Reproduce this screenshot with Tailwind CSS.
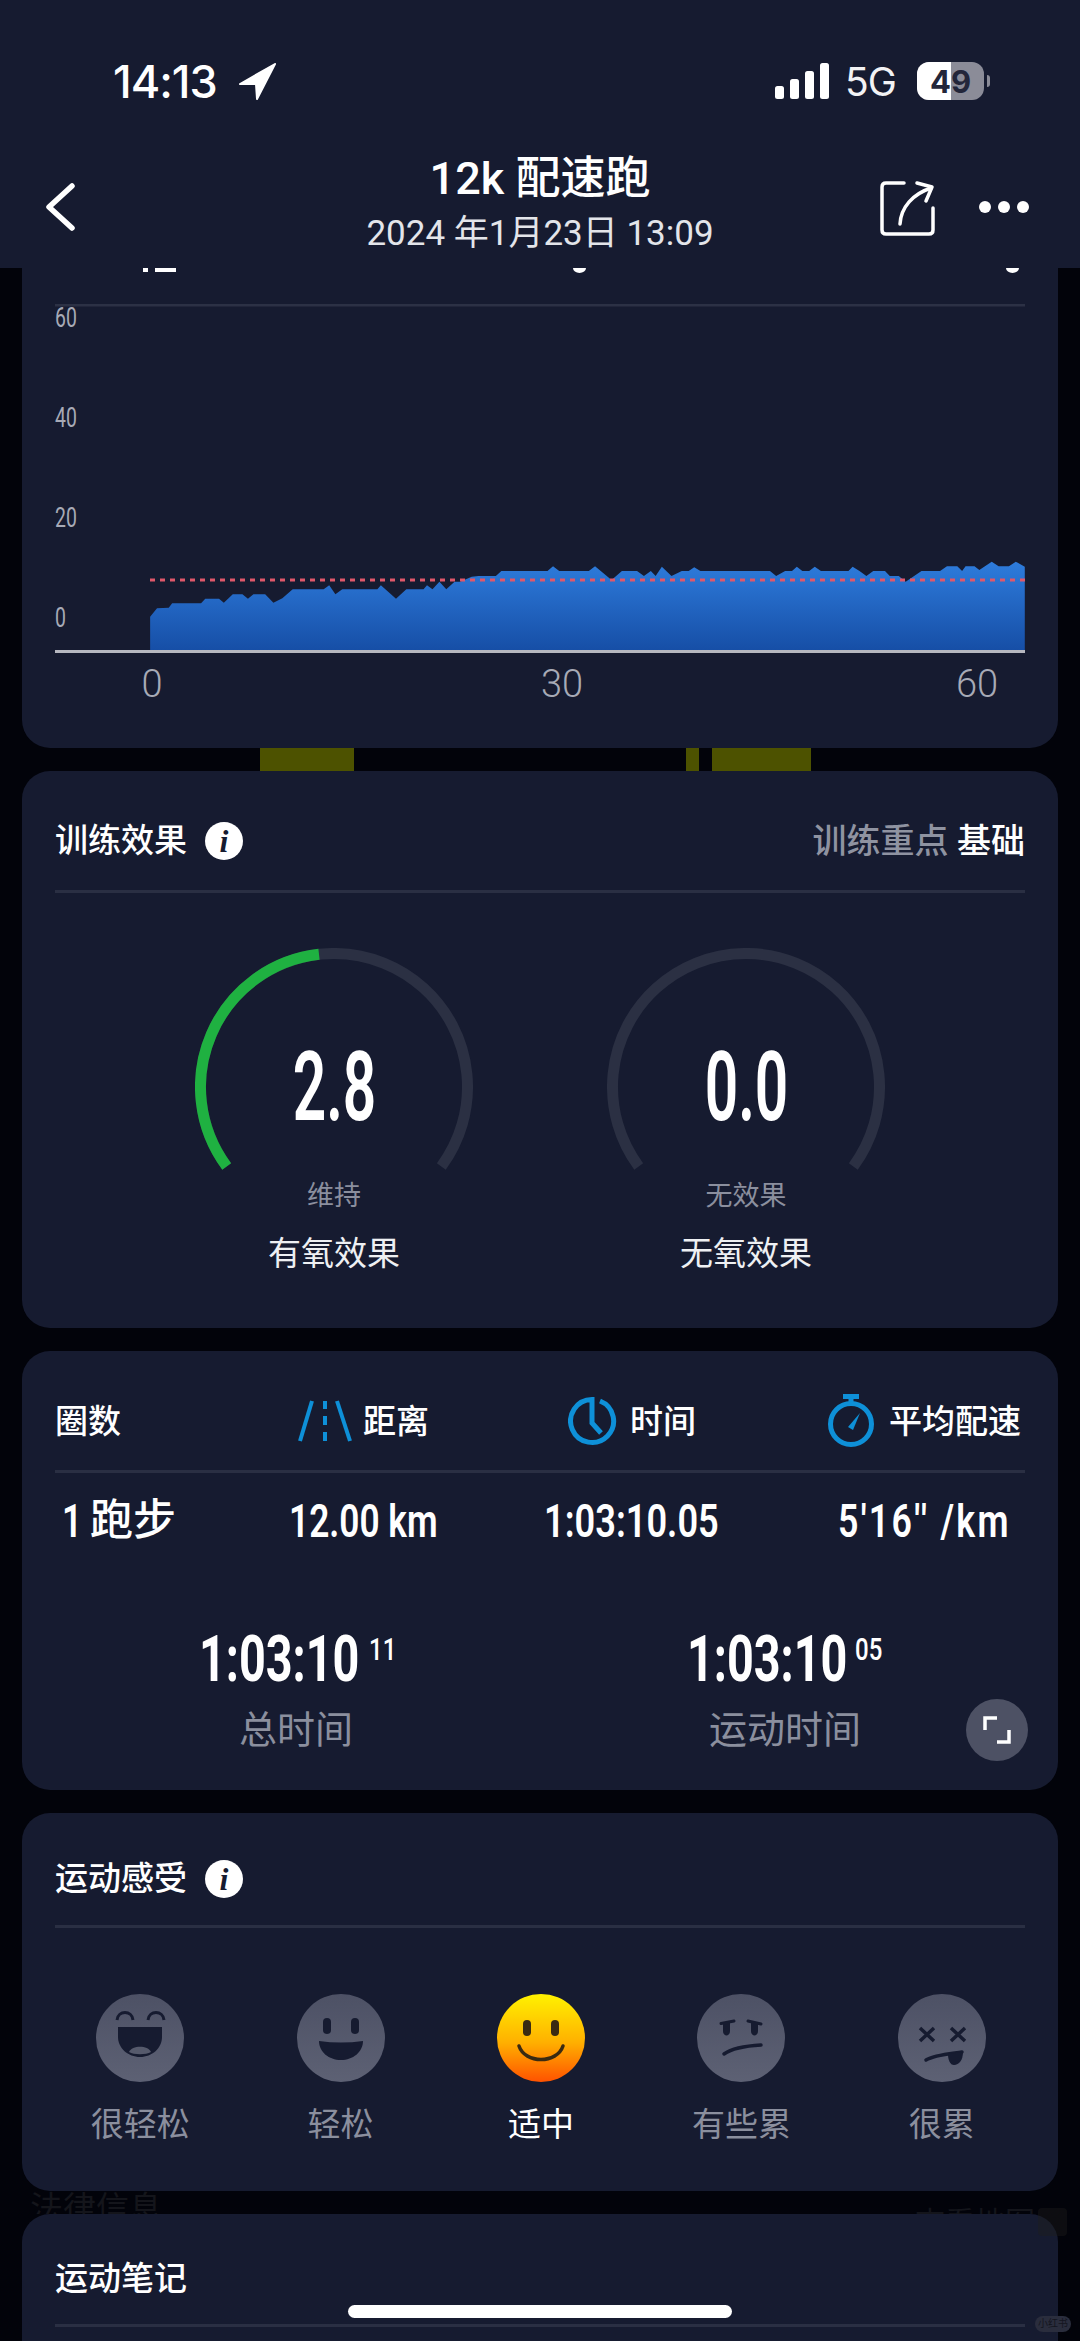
<!DOCTYPE html>
<html lang="zh">
<head>
<meta charset="utf-8">
<title>12k 配速跑</title>
<script src="https://cdn.jsdelivr.net/npm/@tailwindcss/browser@4"></script>
</head>
<body class="bg-[#02030a]">
<div class="relative w-[1080px] h-[2341px] overflow-hidden bg-[#02030a] text-white [font-family:Roboto,'Noto_Sans_CJK_SC',sans-serif]">

  <!-- top bar -->
  <header class="h-[268px] bg-[#161b30] pt-[60px]">
    <div class="flex items-center justify-between h-[42px]">
      <div class="flex items-center pl-[113px]">
        <span class="text-[45px] font-medium leading-none [font-family:Inter,sans-serif] tracking-[-1px] inline-block w-[116px] whitespace-nowrap">14:13</span>
        <svg class="ml-[10px]" width="37" height="37" viewBox="0 0 37 37"><path d="M36 1 L1 21 L17 21 L18 36 Z" fill="#fff" stroke="#fff" stroke-width="2" stroke-linejoin="round"/></svg>
      </div>
      <div class="flex items-center pr-[90px]">
        <svg width="54" height="36" viewBox="0 0 54 36" fill="#fff"><rect x="0" y="23" width="9" height="13" rx="2.5"/><rect x="15" y="16" width="9" height="20" rx="2.5"/><rect x="30" y="8" width="9" height="28" rx="2.5"/><rect x="45" y="0" width="9" height="36" rx="2.5"/></svg>
        <span class="ml-[16px] w-[52px] text-[39px] leading-none [font-family:Inter,sans-serif] tracking-[-1px] text-[#f2f2f4] whitespace-nowrap">5G</span>
        <div class="relative ml-[20px] w-[67px] h-[38px] rounded-[12px] overflow-hidden bg-[#8b8c98]">
          <div class="w-[34px] h-full bg-white"></div>
          <span class="absolute inset-0 flex items-center justify-center text-[31px] font-bold text-[#23263a] [font-family:Inter,sans-serif] leading-none">49</span>
        </div>
        <div class="ml-[3px] w-[3px] h-[12px] rounded-r-full bg-[#8b8c98]"></div>
      </div>
    </div>

    <div class="grid grid-cols-[1fr_auto_1fr] mt-[49px]">
      <div class="pl-[45px] pt-[32px]">
        <svg width="30" height="48" viewBox="0 0 30 48" fill="none" stroke="#fff" stroke-width="5.5" stroke-linecap="round" stroke-linejoin="round"><path d="M27 3 L4 24 L27 45"/></svg>
      </div>
      <div class="flex flex-col items-center">
        <div class="h-[54px] flex items-center text-[45px] font-medium leading-none whitespace-nowrap">12k 配速跑</div>
        <div class="h-[56px] flex items-center text-[35px] leading-none text-[#e3e5ea] whitespace-nowrap">2024 年1月23日 13:09</div>
      </div>
      <div class="flex justify-end items-start pt-[29px] pr-[50px]">
        <svg width="56" height="56" viewBox="0 0 56 56" fill="none" stroke="#fff" stroke-width="3.5" stroke-linecap="round" stroke-linejoin="round"><path d="M24 3 H6 Q2 3 2 7 V50 Q2 54 6 54 H49 Q53 54 53 50 V28"/><path d="M20 44 C21 27 33 14 51 8"/><path d="M37 3 L52 7 L46 21"/></svg>
        <svg class="ml-[42px] mt-[20px]" width="52" height="14" viewBox="0 0 52 14" fill="#fff"><circle cx="7" cy="7" r="6"/><circle cx="26" cy="7" r="6"/><circle cx="45" cy="7" r="6"/></svg>
      </div>
    </div>
  </header>

  <!-- pace chart, scrolled under the bar -->
  <section class="relative mx-[22px] h-[480px] rounded-b-[28px] bg-[#161b30]">
    <svg class="block" width="1036" height="480" viewBox="0 0 1036 480">
      <defs>
        <linearGradient id="area" x1="0" y1="0" x2="0" y2="1">
          <stop offset="0" stop-color="#2e7cdc"/>
          <stop offset="1" stop-color="#164ea6"/>
        </linearGradient>
      </defs>
      <rect x="121" y="0" width="5" height="4" fill="#fff"/><rect x="133" y="0" width="21" height="4" fill="#fff"/>
      <path d="M551 0 h13 a6.5 5 0 0 1 -13 0Z M984 0 h13 a6.5 5 0 0 1 -13 0Z" fill="#fff"/>
      <rect x="33" y="36" width="970" height="2.5" fill="#2c3145"/>
      <g transform="translate(-22,232) scale(0.6887,0.33333)">
        <polygon fill="url(#area)" points="218,350 228,325 245,323 250,310 292,310 298,296 318,296 325,308 338,283 352,283 360,296 368,283 385,283 397,308 410,295 425,268 470,268 478,256 487,283 497,268 548,268 553,256 575,296 590,268 615,268 620,256 628,268 638,245 648,268 660,245 668,245 685,230 695,228 720,228 728,213 795,213 803,199 812,213 855,213 864,199 888,240 903,213 925,213 935,228 945,213 952,228 961,200 975,228 990,213 1000,213 1008,202 1017,213 1118,213 1127,228 1140,213 1150,213 1157,200 1165,213 1175,213 1183,200 1192,213 1232,213 1238,200 1248,213 1258,228 1268,213 1285,213 1292,228 1305,228 1315,245 1338,213 1365,213 1375,199 1390,199 1397,213 1402,199 1415,199 1422,210 1440,185 1450,199 1465,199 1475,185 1488,200 1488,452 218,452"/>
      </g>
      <line x1="128" y1="312" x2="1003" y2="312" stroke="#e0586a" stroke-width="3" stroke-dasharray="5 5"/>
      <rect x="33" y="382" width="970" height="3" fill="#b6b8c0"/>
    </svg>
    <span class="absolute left-[33px] top-[36px] h-[28px] w-[40px] origin-left scale-x-[0.72] text-[27px] leading-[28px] text-[#a7aab6]">60</span>
    <span class="absolute left-[33px] top-[136px] h-[28px] w-[40px] origin-left scale-x-[0.72] text-[27px] leading-[28px] text-[#a7aab6]">40</span>
    <span class="absolute left-[33px] top-[236px] h-[28px] w-[40px] origin-left scale-x-[0.72] text-[27px] leading-[28px] text-[#a7aab6]">20</span>
    <span class="absolute left-[33px] top-[336px] h-[28px] w-[40px] origin-left scale-x-[0.72] text-[27px] leading-[28px] text-[#a7aab6]">0</span>
    <span class="absolute left-[110px] top-[394px] w-[40px] text-center text-[38px] leading-[44px] font-light text-[#a7aab6]">0</span>
    <span class="absolute left-[510px] top-[394px] w-[60px] text-center text-[38px] leading-[44px] font-light text-[#a7aab6]">30</span>
    <span class="absolute left-[925px] top-[394px] w-[60px] text-center text-[38px] leading-[44px] font-light text-[#a7aab6]">60</span>
  </section>

  <!-- map stripes showing behind the cards -->
  <div class="flex h-[23px]">
    <div class="ml-[260px] w-[94px] bg-[#4d5200]"></div>
    <div class="ml-[332px] w-[13px] bg-[#4d5200]"></div>
    <div class="ml-[13px] w-[99px] bg-[#4d5200]"></div>
  </div>

  <!-- training effect -->
  <section class="mx-[22px] h-[557px] rounded-[28px] bg-[#161b30] px-[33px]">
    <div class="flex items-center justify-between h-[122px] pt-[20px] border-b-[3px] border-[#2a2f43]">
      <div class="flex items-center">
        <span class="text-[33px] font-medium leading-none">训练效果</span>
        <span class="ml-[18px] flex items-center justify-center w-[38px] h-[38px] rounded-full bg-white text-[#161b30] text-[32px] font-bold italic leading-none [font-family:'Liberation_Serif',serif]">i</span>
      </div>
      <div class="text-[34px] leading-none font-medium text-[#8f93a1]">训练重点 <span class="text-white">基础</span></div>
    </div>
    <div class="flex pl-[140px] pt-[55px]">
      <div class="relative flex flex-col items-center w-[278px]">
        <svg width="278" height="225" viewBox="0 0 278 225" fill="none" stroke-width="11">
          <path d="M31.7 218.4 A133.5 133.5 0 1 1 246.3 218.4" stroke="#2b3043"/>
          <path d="M31.7 218.4 A133.5 133.5 0 0 1 124 6.3" stroke="#1fb141"/>
        </svg>
        <div class="absolute top-[79px] left-0 right-0 flex justify-center">
          <span class="inline-block scale-x-[0.61] text-[96px] font-semibold leading-[120px]">2.8</span>
        </div>
        <span class="h-[46px] flex items-center text-[27px] text-[#8b8f9e] leading-none">维持</span>
        <span class="h-[68px] flex items-center text-[33px] text-[#eef0f3] leading-none">有氧效果</span>
      </div>
      <div class="relative flex flex-col items-center w-[278px] ml-[134px]">
        <svg width="278" height="225" viewBox="0 0 278 225" fill="none" stroke-width="11">
          <path d="M31.7 218.4 A133.5 133.5 0 1 1 246.3 218.4" stroke="#2b3043"/>
        </svg>
        <div class="absolute top-[79px] left-0 right-0 flex justify-center">
          <span class="inline-block scale-x-[0.61] text-[96px] font-semibold leading-[120px]">0.0</span>
        </div>
        <span class="h-[46px] flex items-center text-[27px] text-[#8b8f9e] leading-none">无效果</span>
        <span class="h-[68px] flex items-center text-[33px] text-[#eef0f3] leading-none">无氧效果</span>
      </div>
    </div>
  </section>

  <div class="h-[23px]"></div>

  <!-- laps -->
  <section class="relative mx-[22px] h-[439px] rounded-[28px] bg-[#161b30] px-[33px]">
    <div class="grid grid-cols-[243px_270px_260px_1fr] items-center h-[122px] pt-[21px] border-b-[3px] border-[#2a2f43] text-[33px] font-medium">
      <span class="leading-none">圈数</span>
      <div class="flex items-center">
        <svg width="54" height="42" viewBox="0 0 54 42" fill="none" stroke="#0e90d8" stroke-width="4"><path d="M14 1 L2 41"/><path d="M39 1 L52 41"/><path d="M27 1 V9 M27 16 V25 M27 32 V41"/></svg>
        <span class="ml-[11px] leading-none">距离</span>
      </div>
      <div class="flex items-center">
        <svg width="50" height="50" viewBox="0 0 50 50" fill="none" stroke="#0e90d8" stroke-width="5"><path d="M32 5 A21.5 21.5 0 1 1 24 3.5 V27 L33 37"/></svg>
        <span class="ml-[12px] leading-none">时间</span>
      </div>
      <div class="flex items-center">
        <svg width="46" height="54" viewBox="0 0 46 54" fill="none" stroke="#0e90d8" stroke-width="5"><path d="M15 2.5 H31 M23 3 V9"/><circle cx="23" cy="30" r="20.5"/><path d="M32 19 L20 33 L25 36 Z" fill="#0e90d8" stroke="none"/></svg>
        <span class="ml-[15px] leading-none whitespace-nowrap">平均配速</span>
      </div>
    </div>

    <div class="grid grid-cols-[227px_255px_294px_1fr] items-center h-[60px] mt-[17px] pl-[7px] text-[47px] font-semibold leading-none whitespace-nowrap">
      <div class="flex items-center"><span class="inline-block origin-left scale-x-[0.75] w-[28px]">1</span><span class="text-[43px] font-medium">跑步</span></div>
      <span class="inline-block origin-left scale-x-[0.75]">12.00 km</span>
      <span class="inline-block origin-left scale-x-[0.77]">1:03:10.05</span>
      <span class="inline-block origin-left scale-x-[0.76] tracking-[3px]">5'16'' /km</span>
    </div>

    <div class="grid grid-cols-[482px_496px] mt-[75px]">
      <div class="flex flex-col items-center">
        <div class="flex justify-center h-[70px] whitespace-nowrap">
          <div class="w-[160px]"><span class="inline-block origin-left scale-x-[0.73] text-[64px] font-bold leading-[70px]">1:03:10</span></div>
          <span class="inline-block w-[24px] ml-[10px] mt-[8px] origin-left scale-x-[0.75] text-[32px] font-medium leading-none">11</span>
        </div>
        <span class="mt-[10px] h-[50px] flex items-center text-[38px] leading-none text-[#8b8f9e]">总时间</span>
      </div>
      <div class="flex flex-col items-center">
        <div class="flex justify-center h-[70px] whitespace-nowrap">
          <div class="w-[160px]"><span class="inline-block origin-left scale-x-[0.73] text-[64px] font-bold leading-[70px]">1:03:10</span></div>
          <span class="inline-block w-[28px] ml-[8px] mt-[8px] origin-left scale-x-[0.75] text-[32px] font-medium leading-none">05</span>
        </div>
        <span class="mt-[10px] h-[50px] flex items-center text-[38px] leading-none text-[#8b8f9e]">运动时间</span>
      </div>
    </div>

    <button class="absolute right-[30px] bottom-[29px] flex items-center justify-center w-[62px] h-[62px] rounded-full bg-[#4d5164]">
      <svg width="28" height="28" viewBox="0 0 28 28" fill="none" stroke="#fff" stroke-width="3.5"><path d="M2 14 V2 H14"/><path d="M26 14 V26 H14"/></svg>
    </button>
  </section>

  <div class="h-[23px]"></div>

  <!-- perceived effort -->
  <section class="mx-[22px] h-[378px] rounded-[28px] bg-[#161b30] px-[33px]">
    <div class="flex items-center h-[115px] pt-[19px] border-b-[3px] border-[#2a2f43]">
      <span class="text-[33px] font-medium leading-none">运动感受</span>
      <span class="ml-[18px] flex items-center justify-center w-[38px] h-[38px] rounded-full bg-white text-[#161b30] text-[32px] font-bold italic leading-none [font-family:'Liberation_Serif',serif]">i</span>
    </div>
    <div class="grid grid-cols-5 w-[1002px] -ml-[15px] pt-[66px]">
      <div class="flex flex-col items-center">
        <svg width="88" height="88" viewBox="0 0 88 88">
          <circle cx="44" cy="44" r="44" fill="url(#face)"/>
          <path d="M21 26 C22 16 36 16 37 26 M52 26 C53 16 67 16 68 26" fill="none" stroke="#161b30" stroke-width="3"/>
          <path d="M22 33 H66 V43 C66 54 56 63 44 63 C32 63 22 54 22 43 Z" fill="#161b30"/>
          <path d="M33 58 C36 51 52 51 55 58 C50 61 38 61 33 58 Z" fill="#565a6c"/>
        </svg>
        <span class="mt-[19px] h-[46px] flex items-center text-[33px] leading-none text-[#8b8f9e]">很轻松</span>
      </div>
      <div class="flex flex-col items-center">
        <svg width="88" height="88" viewBox="0 0 88 88">
          <defs><linearGradient id="face" x1="0" y1="0" x2="0" y2="1"><stop offset="0" stop-color="#4d5165"/><stop offset="1" stop-color="#5d6174"/></linearGradient></defs>
          <circle cx="44" cy="44" r="44" fill="url(#face)"/>
          <rect x="26" y="24" width="8" height="16" rx="4" fill="#161b30"/><rect x="54" y="24" width="8" height="16" rx="4" fill="#161b30"/>
          <path d="M22 47 Q44 50 66 47 C66 58 56 66 44 66 C32 66 22 58 22 47 Z" fill="#161b30"/>
        </svg>
        <span class="mt-[19px] h-[46px] flex items-center text-[33px] leading-none text-[#8b8f9e]">轻松</span>
      </div>
      <div class="flex flex-col items-center">
        <svg width="88" height="88" viewBox="0 0 88 88">
          <defs><linearGradient id="sun" x1="0" y1="0" x2="0" y2="1"><stop offset="0" stop-color="#fff200"/><stop offset="0.55" stop-color="#ffb000"/><stop offset="1" stop-color="#ff5200"/></linearGradient></defs>
          <circle cx="44" cy="44" r="44" fill="url(#sun)"/>
          <rect x="26" y="26" width="8" height="16" rx="4" fill="#3a2a12"/><rect x="54" y="26" width="8" height="16" rx="4" fill="#3a2a12"/>
          <path d="M22 52 C28 70 60 70 66 52" fill="none" stroke="#3a2a12" stroke-width="3.5" stroke-linecap="round"/>
        </svg>
        <span class="mt-[19px] h-[46px] flex items-center text-[33px] leading-none text-white">适中</span>
      </div>
      <div class="flex flex-col items-center">
        <svg width="88" height="88" viewBox="0 0 88 88">
          <circle cx="44" cy="44" r="44" fill="url(#face)"/>
          <path d="M24 29.5 L37 27 M51 27 L64 30" fill="none" stroke="#161b30" stroke-width="3" stroke-linecap="round"/>
          <path d="M26 29 H33 V37 C33 43 26 43 26 37 Z M54 29 H61 V37 C61 43 54 43 54 37 Z" fill="#161b30"/>
          <path d="M27 60 C34 55 46 52 64 51" fill="none" stroke="#161b30" stroke-width="3.5" stroke-linecap="round"/>
        </svg>
        <span class="mt-[19px] h-[46px] flex items-center text-[33px] leading-none text-[#8b8f9e]">有些累</span>
      </div>
      <div class="flex flex-col items-center">
        <svg width="88" height="88" viewBox="0 0 88 88">
          <circle cx="44" cy="44" r="44" fill="url(#face)"/>
          <path d="M22 34 L36 47 M36 34 L22 47 M53 34 L67 47 M67 34 L53 47" fill="none" stroke="#161b30" stroke-width="3.5"/>
          <path d="M28 66 C36 61 50 60 64 58" fill="none" stroke="#161b30" stroke-width="3.5" stroke-linecap="round"/>
          <path d="M50 60 L65 58 C65 66 61 71 56 71 C52 71 50 66 50 60 Z" fill="#161b30"/>
        </svg>
        <span class="mt-[19px] h-[46px] flex items-center text-[33px] leading-none text-[#8b8f9e]">很累</span>
      </div>
    </div>
  </section>

  <!-- page text faintly visible behind the cards -->
  <div class="flex justify-between h-[23px] overflow-hidden pl-[30px] pr-[45px] text-[#14151b] text-[33px] leading-[36px]">
    <span>法律信息</span>
    <span class="mt-[14px] text-[30px]">查看地图</span>
  </div>

  <!-- notes -->
  <section class="mx-[22px] h-[200px] rounded-t-[28px] bg-[#161b30] px-[33px]">
    <div class="flex items-center h-[113px] pt-[19px] border-b-[3px] border-[#2a2f43]">
      <span class="text-[33px] font-medium leading-none">运动笔记</span>
    </div>
  </section>

  <!-- home indicator and watermark, over everything -->
  <div class="absolute left-[1038px] top-[2208px] w-[29px] h-[28px] rounded-[4px] bg-[#1e1e1c]/40"></div>
  <div class="absolute left-[348px] top-[2305px] w-[384px] h-[13px] rounded-full bg-white"></div>
  <div class="absolute left-[1035px] top-[2316px] flex items-center justify-center w-[36px] h-[16px] rounded-full bg-[#2a2d3d] text-[10px] leading-none text-[#14151f]">小红书</div>
</div>
</body>
</html>
